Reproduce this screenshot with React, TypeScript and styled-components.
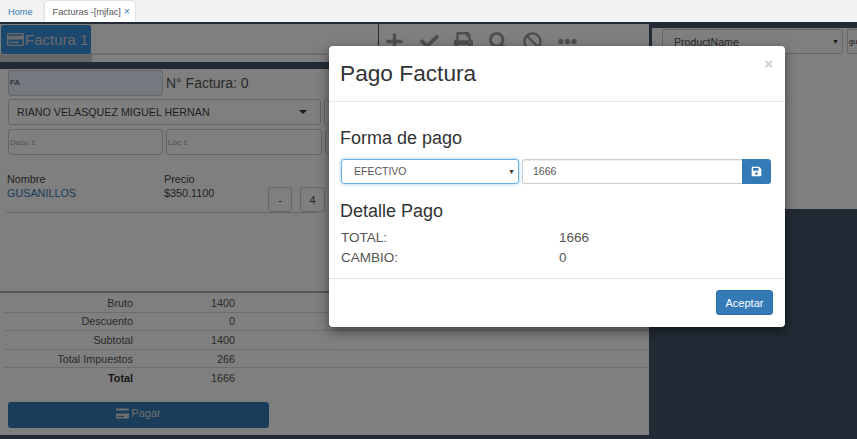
import styled, { createGlobalStyle } from "styled-components";
import { FaPlus, FaCheck, FaPrint, FaSearch, FaBan, FaEllipsisH, FaRegCreditCard, FaCreditCard, FaSave } from "react-icons/fa";

const GlobalStyle = createGlobalStyle`
  html, body { margin: 0; height: 100%; overflow: hidden; }
  body {
    font-family: "Liberation Sans", Arial, sans-serif;
    font-size: 12px;
    color: #333;
    background: #fff;
  }
  * { box-sizing: border-box; }
`;

const Page = styled.div`
  width: 857px;
  height: 439px;
  display: flex;
  flex-direction: column;
  position: relative;
  overflow: hidden;
`;

const TabBar = styled.div`
  height: 22px;
  flex: none;
  display: flex;
  align-items: flex-end;
  padding-left: 2px;
  background: #f2f2f2;
  font-size: 9.2px;
`;

const Tab = styled.div<{ $active?: boolean }>`
  height: ${(p) => (p.$active ? 21 : 20)}px;
  display: flex;
  align-items: center;
  gap: 3px;
  white-space: nowrap;
  padding: 0 ${(p) => (p.$active ? 5 : 6)}px 0 ${(p) => (p.$active ? 8 : 6)}px;
  margin-left: ${(p) => (p.$active ? 6 : 0)}px;
  color: ${(p) => (p.$active ? "#555" : "#337ab7")};
  background: ${(p) => (p.$active ? "#fff" : "transparent")};
  border-radius: 3px 3px 0 0;
  box-shadow: ${(p) => (p.$active ? "0 0 2px rgba(0,0,0,.25)" : "none")};
`;

const TabClose = styled.span`
  color: #337ab7;
  font-size: 10px;
`;

const Workspace = styled.div`
  flex: 1;
  min-height: 0;
  display: flex;
  background: #44566a;
  border-top: 2px solid #44566a;
`;

const LeftPanel = styled.div`
  width: 649px;
  flex: none;
  display: flex;
  flex-direction: column;
  height: 411px;
`;

const TopRow = styled.div`
  height: 38px;
  flex: none;
  display: flex;
  background: #fff;
`;

const InvoiceTabs = styled.div`
  width: 379px;
  flex: none;
  border-right: 1px solid #555;
  display: flex;
  flex-direction: column;
`;

const InvoiceTabRow = styled.div`
  height: 31px;
  flex: none;
  padding: 1px 0 0 1px;
  border-bottom: 2px solid #ddd;
`;

const InvoiceTab = styled.div`
  width: 90px;
  height: 29px;
  display: flex;
  align-items: center;
  gap: 1px;
  padding-left: 6px;
  background: #3890de;
  color: #d4d4d4;
  border-radius: 2px;
  font-size: 15px;
  line-height: 1;
  white-space: nowrap;
`;

const TabStub = styled.div`
  width: 92px;
  height: 7px;
  background: #ccc;
`;

const ToolBar = styled.div`
  flex: 1;
  display: flex;
  align-items: flex-start;
  gap: 15.6px;
  padding: 8px 0 0 6px;
  color: #9e9e9e;
  font-size: 19px;
`;

const FormPanel = styled.div`
  margin-top: 7px;
  flex: 1;
  min-height: 0;
  background: #fff;
  display: flex;
  flex-direction: column;
`;

const FormArea = styled.div`
  height: 224px;
  flex: none;
  padding: 1px 0 0 8px;
  border-bottom: 2px solid #aaa;
`;

const SerialRow = styled.div`
  display: flex;
  align-items: center;
  height: 25px;
`;

const Field = styled.div<{ $w: number; $fill?: string; $muted?: boolean }>`
  width: ${(p) => p.$w}px;
  height: 26px;
  flex: none;
  display: flex;
  align-items: center;
  padding-left: 1px;
  font-size: 8px;
  color: ${(p) => (p.$muted ? "#999" : "#333")};
  background: ${(p) => p.$fill ?? "#fff"};
  border: 1px solid #ccc;
  border-radius: 3px;
`;

const InvoiceNumber = styled.div`
  margin-left: 3px;
  font-size: 14px;
  color: #555;
`;

const ClientRow = styled.div`
  margin-top: 4px;
  height: 26px;
  display: flex;
  gap: 3px;
`;

const ClientSelect = styled.div`
  width: 313px;
  height: 26px;
  display: flex;
  align-items: center;
  justify-content: space-between;
  padding: 0 13px 0 8px;
  font-size: 10.7px;
  color: #444;
  border: 1px solid #ccc;
  border-radius: 3px;
`;

const Caret = styled.span`
  width: 0;
  height: 0;
  border-left: 4px solid transparent;
  border-right: 4px solid transparent;
  border-top: 4px solid #333;
`;

const DocRow = styled.div`
  margin-top: 4px;
  height: 26px;
  display: flex;
  gap: 3px;
`;

const ProductRow = styled.div`
  margin: 17px 0 0 -2px;
  width: 312px;
  height: 41px;
  display: flex;
  border-bottom: 1px solid #ccc;
  padding-left: 1px;
`;

const ProductCell = styled.div<{ $w: number }>`
  width: ${(p) => p.$w}px;
  flex: none;
  font-size: 10.8px;
  line-height: 14px;
  color: #444;
`;

const ProductLink = styled.div`
  color: #337ab7;
`;

const QtyButtons = styled.div`
  display: flex;
  gap: 8px;
  margin-top: 15px;
`;

const QtyButton = styled.div<{ $w: number }>`
  width: ${(p) => p.$w}px;
  height: 25px;
  flex: none;
  display: flex;
  align-items: center;
  justify-content: center;
  border: 1px solid #ccc;
  border-radius: 3px;
  color: #444;
  font-size: 11px;
`;

const TotalsTable = styled.div`
  padding: 1px 0 0 4px;
`;

const TotalsRow = styled.div<{ $last?: boolean }>`
  height: 18.6px;
  display: grid;
  grid-template-columns: 129px 102px;
  align-items: center;
  font-size: 10.8px;
  color: #555;
  text-align: right;
  border-bottom: ${(p) => (p.$last ? "none" : "1px solid #ddd")};
`;

const TotalsLabel = styled.span<{ $strong?: boolean }>`
  font-weight: ${(p) => (p.$strong ? 700 : 400)};
  color: ${(p) => (p.$strong ? "#333" : "#555")};
`;

const PayButton = styled.div`
  margin: 15px 0 0 8px;
  width: 261px;
  height: 26px;
  display: flex;
  align-items: center;
  justify-content: center;
  gap: 2px;
  padding-bottom: 3px;
  font-size: 11px;
  color: #ddd;
  background: #337ab7;
  border-radius: 3px;
`;

const RightPanel = styled.div`
  margin: 4px 0 0 3px;
  flex: 1;
  height: 181px;
  background: #fff;
  padding: 1px 0 0 10px;
  display: flex;
  gap: 4px;
  overflow: hidden;
`;

const ProductSelect = styled.div`
  width: 181px;
  height: 25px;
  flex: none;
  display: flex;
  align-items: center;
  justify-content: space-between;
  padding: 0 3px 0 11px;
  border: 1px solid #ccc;
  border-radius: 3px;
  font-size: 10.6px;
  color: #555;
`;

const SmallCaret = styled.span`
  font-size: 7px;
  color: #333;
`;

const SearchBox = styled.div`
  flex: 1;
  height: 25px;
  display: flex;
  align-items: center;
  padding-left: 1px;
  border: 1px solid #ccc;
  border-right: none;
  border-radius: 3px 0 0 3px;
  font-size: 7.5px;
  color: #333;
`;

const Backdrop = styled.div`
  position: absolute;
  inset: 22px 0 0 0;
  background: rgba(0, 0, 0, 0.5);
`;

const Modal = styled.div`
  position: absolute;
  left: 329px;
  top: 46px;
  width: 456px;
  height: 281px;
  background: #fff;
  border-radius: 4px;
  box-shadow: 0 4px 12px rgba(0, 0, 0, 0.5);
  display: flex;
  flex-direction: column;
`;

const ModalHeader = styled.div`
  height: 56px;
  flex: none;
  padding: 12px 11px 0;
  display: flex;
  justify-content: space-between;
  border-bottom: 1px solid #e5e5e5;
`;

const ModalTitle = styled.div`
  font-size: 22.7px;
  line-height: 30px;
  color: #333;
`;

const CloseX = styled.span`
  font-size: 15px;
  line-height: 11px;
  font-weight: 700;
  color: #ccc;
  margin: 0 1px 0 0;
`;

const ModalBody = styled.div`
  flex: 1;
  padding: 25px 11px 0;
`;

const SectionTitle = styled.div<{ $gap: number }>`
  font-size: 18px;
  line-height: 22px;
  color: #333;
  margin-bottom: ${(p) => p.$gap}px;
`;

const PayRow = styled.div`
  display: flex;
  margin: 0 3px 16px 1px;
  height: 25px;
`;

const PaySelect = styled.div`
  width: 178px;
  height: 25px;
  flex: none;
  display: flex;
  align-items: center;
  justify-content: space-between;
  padding: 0 3px 1px 12px;
  font-size: 10.5px;
  color: #555;
  border: 1px solid #66afe9;
  border-radius: 3px;
  box-shadow: 0 0 4px rgba(102, 175, 233, 0.6);
`;

const AmountInput = styled.div`
  margin-left: 3px;
  flex: 1;
  display: flex;
  align-items: center;
  padding: 0 0 1px 10px;
  font-size: 10.5px;
  color: #555;
  border: 1px solid #ccc;
  border-right: none;
  border-radius: 3px 0 0 3px;
  box-shadow: inset 0 1px 1px rgba(0, 0, 0, 0.075);
`;

const SaveButton = styled.div`
  width: 29px;
  flex: none;
  display: flex;
  align-items: center;
  justify-content: center;
  background: #337ab7;
  color: #fff;
  font-size: 11px;
  border-radius: 0 3px 3px 0;
`;

const DetailRow = styled.div`
  display: grid;
  grid-template-columns: 218px 1fr;
  height: 20px;
  padding-left: 1px;
  align-items: center;
  font-size: 13.5px;
  color: #555;
`;

const ModalFooter = styled.div`
  height: 49px;
  flex: none;
  padding: 11px 12px 0 0;
  display: flex;
  justify-content: flex-end;
  border-top: 1px solid #e5e5e5;
`;

const AcceptButton = styled.div`
  width: 57px;
  height: 25px;
  display: flex;
  align-items: center;
  justify-content: center;
  font-size: 11px;
  color: #fff;
  background: #337ab7;
  border: 1px solid #2e6da4;
  border-radius: 3px;
`;

const totals = [
  { label: "Bruto", value: "1400" },
  { label: "Descuento", value: "0" },
  { label: "Subtotal", value: "1400" },
  { label: "Total Impuestos", value: "266" },
  { label: "Total", value: "1666", strong: true },
];

const App = () => {
  return (
    <Page>
      <GlobalStyle />
      <TabBar>
        <Tab>Home</Tab>
        <Tab $active>
          Facturas -[mjfac] <TabClose>×</TabClose>
        </Tab>
      </TabBar>
      <Workspace>
        <LeftPanel>
          <TopRow>
            <InvoiceTabs>
              <InvoiceTabRow>
                <InvoiceTab>
                  <FaRegCreditCard size={17} />
                  Factura 1
                </InvoiceTab>
              </InvoiceTabRow>
              <TabStub />
            </InvoiceTabs>
            <ToolBar>
              <FaPlus />
              <FaCheck />
              <FaPrint />
              <FaSearch />
              <FaBan />
              <FaEllipsisH />
            </ToolBar>
          </TopRow>
          <FormPanel>
            <FormArea>
              <SerialRow>
                <Field $w={155} $fill="#e8f0fe">FA</Field>
                <InvoiceNumber>N° Factura: 0</InvoiceNumber>
              </SerialRow>
              <ClientRow>
                <ClientSelect>
                  RIANO VELASQUEZ MIGUEL HERNAN
                  <Caret />
                </ClientSelect>
                <Field $w={10} />
              </ClientRow>
              <DocRow>
                <Field $w={155} $muted>Docu 1</Field>
                <Field $w={156} $muted>Loc 1</Field>
                <Field $w={10} />
              </DocRow>
              <ProductRow>
                <ProductCell $w={157}>
                  Nombre
                  <ProductLink>GUSANILLOS</ProductLink>
                </ProductCell>
                <ProductCell $w={104}>
                  Precio
                  <div>$350.1100</div>
                </ProductCell>
                <QtyButtons>
                  <QtyButton $w={24}>-</QtyButton>
                  <QtyButton $w={25}>4</QtyButton>
                </QtyButtons>
              </ProductRow>
            </FormArea>
            <TotalsTable>
              {totals.map((row, i) => (
                <TotalsRow key={row.label} $last={i === totals.length - 1}>
                  <TotalsLabel $strong={row.strong}>{row.label}</TotalsLabel>
                  <span>{row.value}</span>
                </TotalsRow>
              ))}
            </TotalsTable>
            <PayButton>
              <FaCreditCard size={13} />
              Pagar
            </PayButton>
          </FormPanel>
        </LeftPanel>
        <RightPanel>
          <ProductSelect>
            ProductName
            <SmallCaret>▼</SmallCaret>
          </ProductSelect>
          <SearchBox>gu</SearchBox>
        </RightPanel>
      </Workspace>
      <Backdrop />
      <Modal>
        <ModalHeader>
          <ModalTitle>Pago Factura</ModalTitle>
          <CloseX>×</CloseX>
        </ModalHeader>
        <ModalBody>
          <SectionTitle $gap={10}>Forma de pago</SectionTitle>
          <PayRow>
            <PaySelect>
              EFECTIVO
              <SmallCaret>▼</SmallCaret>
            </PaySelect>
            <AmountInput>1666</AmountInput>
            <SaveButton>
              <FaSave />
            </SaveButton>
          </PayRow>
          <SectionTitle $gap={5}>Detalle Pago</SectionTitle>
          <DetailRow>
            <span>TOTAL:</span>
            <span>1666</span>
          </DetailRow>
          <DetailRow>
            <span>CAMBIO:</span>
            <span>0</span>
          </DetailRow>
        </ModalBody>
        <ModalFooter>
          <AcceptButton>Aceptar</AcceptButton>
        </ModalFooter>
      </Modal>
    </Page>
  );
};

export default App;
